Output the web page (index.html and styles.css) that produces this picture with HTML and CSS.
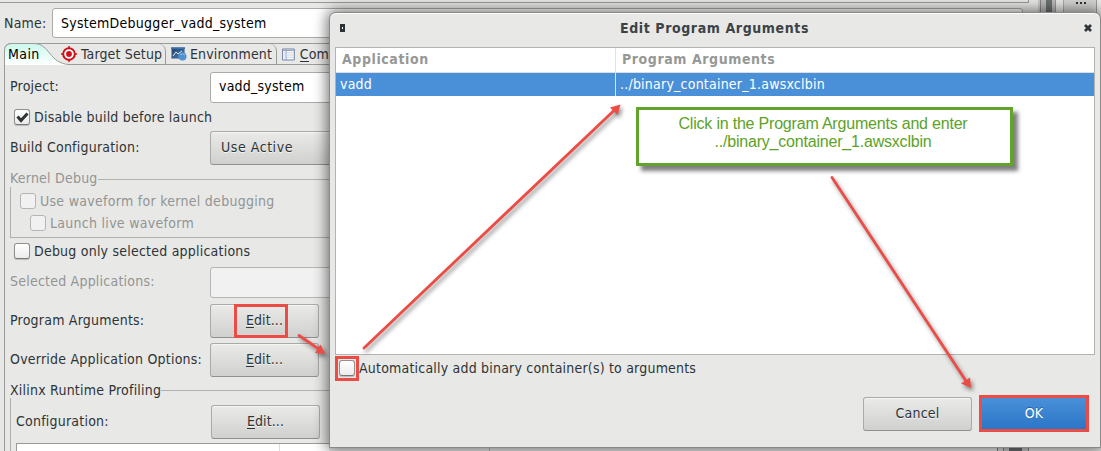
FILE: index.html
```html
<!DOCTYPE html>
<html lang="en">
<head>
<meta charset="utf-8">
<title>Edit Program Arguments</title>
<link rel="stylesheet" href="styles.css">
</head>
<body>
<main class="screen">
  <div class="frame-top"></div>
  <section class="config">
    <div class="name-row"><label>Name:</label><div class="field name-field"><span class="t-name">SystemDebugger_vadd_system</span></div></div>
    <nav class="tabs">
      <div class="tab tab-main">
        <svg class="tab-shape" width="68" height="22" viewBox="0 0 68 22"><defs><linearGradient id="mint" x2="0" y2="1"><stop stop-color="#c9f8ea"/><stop offset="1" stop-color="#fff"/></linearGradient></defs><path d="M.5 22V7Q1 .5 8 .5H30C46 .5 45 20.500 65 21.500V22" fill="url(#mint)" stroke="#9a9c99"/></svg>
        <span class="tab-label">Main</span>
      </div>
      <div class="tab tab-target">
        <svg width="16" height="16" viewBox="0 0 16 16"><circle cx="8" cy="8" r="5.800" fill="#fff" stroke="#cf1019" stroke-width="2"/><circle cx="8" cy="8" r="2.900" fill="#cf1019"/><path d="M8 0V3M8 13V16M0 8H3M13 8H16" stroke="#cf1019" stroke-width="1.500"/></svg>
        <span>Target Setup</span>
      </div>
      <div class="tab tab-env">
        <svg width="16" height="14" viewBox="0 0 16 14"><defs><linearGradient id="scr" x2="1" y2="1"><stop stop-color="#243c66"/><stop offset="1" stop-color="#4b83bd"/></linearGradient></defs><path d="M.5.500H13.500V11.500H.500Z" fill="url(#scr)" stroke="#8c9bac"/><path d="M0 .5H14V2H0Z" fill="#386fae"/><path d="M2 9L5 5L7 7L11 4" fill="none" stroke="#dce8f2"/><circle cx="11.500" cy="9.500" r="4" fill="#4e92d2"/><path d="M9 8Q11 5.500 14 8" stroke="#8fbbe2" fill="none"/></svg>
        <span>Environment</span>
      </div>
      <div class="tab tab-common">
        <svg width="14" height="13" viewBox="0 0 14 13"><path d="M.5.500H13.500V12.500H.500Z" fill="#f9fbff" stroke="#65799f"/><path d="M1 2H13M4.500 1V12" stroke="#8595b5"/><path d="M1 4.500H13M1 7H13M1 9.500H13" stroke="#cbd2df"/></svg>
        <span><u>C</u>om</span>
      </div>
    </nav>
    <div class="panel">
      <div class="row r-project"><label>Project:</label><div class="field">vadd_system</div></div>
      <div class="check-row r-disable"><i class="check"><svg width="14" height="14" viewBox="0 0 14 14"><path d="M2.500 6.500L6 10.500L12.500 3.500" fill="none" stroke="#2e3436" stroke-width="3"/></svg></i><span>Disable build before launch</span></div>
      <div class="row r-build"><label>Build Configuration:</label><div class="button combo">Use Active</div></div>
      <div class="group kernel">
        <div class="legend"><span>Kernel Debug</span></div>
        <div class="group-body">
          <div class="check-row"><i class="check"></i><span>Use waveform for kernel debugging</span></div>
          <div class="check-row nested"><i class="check"></i><span>Launch live waveform</span></div>
        </div>
      </div>
      <div class="check-row r-debug"><i class="check"></i><span>Debug only selected applications</span></div>
      <div class="row r-selected"><label>Selected Applications:</label><div class="field off"></div></div>
      <div class="row r-edit"><label>Program Arguments:</label><div class="button edit"><span><u>E</u>dit...</span></div></div>
      <div class="row r-edit"><label>Override Application Options:</label><div class="button edit"><span><u>E</u>dit...</span></div></div>
      <div class="group profiling">
        <div class="legend"><span>Xilinx Runtime Profiling</span></div>
        <div class="group-body">
          <div class="row r-config"><label>Configuration:</label><div class="button edit"><span><u>E</u>dit...</span></div></div>
          <div class="table-top"><i></i></div>
        </div>
      </div>
    </div>
  </section>
  <div class="right-strip"><div class="scroller"></div><div class="more"><i></i><i></i><i></i></div></div>
  <div class="bottom-strip"></div>

  <section class="dialog">
    <header class="titlebar">
      <svg class="menu" width="5" height="8" viewBox="0 0 5 8"><path d="M0 0H5V8H0Z" fill="#2e3436"/><path d="M2 3H3V5H2Z" fill="#fff"/></svg>
      <h1>Edit Program Arguments</h1>
      <svg class="close" width="8" height="8" viewBox="0 0 8 8"><path d="M1 1L7 7M7 1L1 7" stroke="#2e3436" stroke-width="2.700"/></svg>
    </header>
    <div class="table">
      <div class="thead"><span>Application</span><span>Program Arguments</span></div>
      <div class="trow"><span>vadd</span><span>../binary_container_1.awsxclbin</span></div>
    </div>
    <div class="auto"><div class="auto-mark"><i class="check"></i></div><span>Automatically add binary container(s) to arguments</span></div>
    <footer class="actions"><div class="button cancel">Cancel</div><div class="button ok">OK</div></footer>
  </section>

  <div class="callout">Click in the Program Arguments and enter<br>../binary_container_1.awsxclbin</div>
  <div class="mark-edit"></div>
  <svg class="arrows" width="1101" height="451" viewBox="0 0 1101 451">
    <g stroke="#ec4c46" stroke-width="2.800" fill="#ec4c46" stroke-linecap="round">
      <path d="M299 335.500L318 348.500"/><path d="M325.500 354L315 353L320.500 344.500Z" stroke="none"/>
      <path d="M364 348L614 110.500"/><path d="M620.500 104.500L617.500 115L610 107.500Z" stroke="none"/>
      <path d="M832 177.500L966 381"/><path d="M971 388L961 383.500L970 377.500Z" stroke="none"/>
    </g>
  </svg>
</main>
</body>
</html>
```
FILE: styles.css
```css
* { box-sizing: border-box; }
body { margin: 0; overflow: hidden; background: #e8e8e7; }
.screen { position: relative; width: 1101px; height: 451px; overflow: hidden; background: #e8e8e7; color: #2e3436; font: 14px/18px "DejaVu Sans Condensed", "DejaVu Sans", sans-serif; font-stretch: condensed; letter-spacing: .22px; }
.frame-top { height: 3px; width: 1029px; border-bottom: 1px solid #999b98; border-right: 1px solid #999b98; }
.config { width: 1023px; }
.name-row { display: flex; align-items: center; height: 40px; padding-left: 4px; gap: 5px; }
.name-row label { width: 43px; padding-bottom: 1px; }
.t-name { letter-spacing: .27px; }
.field { height: 31px; background: #fff; border: 1px solid #a9aba7; border-radius: 3px; color: #000; padding: 5px 8px; flex: 1; }
.field.off { background: #f1f1f1; border-color: #b5b6b4; }
.name-field { height: 30px; }
.tabs { display: flex; height: 22px; margin-left: 4px; border-top: 1px solid #9a9c99; border-bottom: 1px solid #9a9c99; border-radius: 7px 0 0; letter-spacing: .15px; }
.tab { display: flex; align-items: center; height: 20px; white-space: nowrap; }
.tab-main { width: 57px; position: relative; color: #000; padding-left: 4px; }
.tab-shape { position: absolute; left: 0; top: -1px; }
.tab-label { position: relative; letter-spacing: .4px; }
.tab-target { width: 105px; gap: 4px; border-right: 1px solid #9a9c99; border-top-right-radius: 7px; }
.tab-env { width: 111px; padding-left: 5px; gap: 3px; border-right: 1px solid #9a9c99; border-top-right-radius: 7px; }
.tab-common { width: 52px; overflow: hidden; padding-left: 5px; gap: 5px; }
.panel { margin-left: 4px; height: 386px; border-left: 1px solid #9a9c99; padding-top: 1px; }
.row { display: flex; align-items: center; padding-left: 5px; }
.row label { width: 200px; flex: none; padding-bottom: 2px; white-space: nowrap; }
.r-project { height: 42px; }
.r-project .field { padding-top: 4px; }
.r-build { height: 44px; }
.check-row { display: flex; align-items: center; gap: 4px; }
.check { width: 16px; height: 16px; flex: none; border: 1px solid #8f918d; border-bottom-color: #777975; border-radius: 3px; background: linear-gradient(#fff, #ececec); box-shadow: 0 1px 1px #bbb; }
.check svg { display: block; }
.r-disable, .r-debug { padding-left: 9px; }
.r-disable { height: 18px; }
.r-debug { height: 23px; padding-bottom: 1px; }
.button { display: flex; align-items: center; height: 34px; border: 1px solid #a9aba7; border-bottom-color: #8f918d; border-radius: 3px; background: linear-gradient(#eaeae9, #d0d0ce); text-shadow: 0 1px #f4f4f4; box-shadow: inset 0 1px #f5f5f5; padding-bottom: 2px; }
.combo { flex: 1; padding-left: 10px; letter-spacing: .55px; }
.edit { width: 109px; justify-content: center; letter-spacing: .1px; }
u { text-decoration: none; box-shadow: inset 0 -1px #2e3436; display: inline-block; height: 17px; }
.group { margin-left: 5px; }
.legend { display: flex; height: 17px; align-items: center; white-space: nowrap; }
.legend::after { content: ""; flex: 1; height: 1px; background: #b0b1af; margin: 2px 0 0 0; }
.group-body { border-left: 1px solid #b0b1af; }
.kernel { height: 70px; color: #929593; }
.kernel .legend span { padding-bottom: 2px; }
.kernel .group-body { height: 51px; border-bottom: 1px solid #b0b1af; padding: 3px 0 0 9px; }
.kernel .check-row { height: 22px; letter-spacing: .28px; }
.kernel .check { background: #f1f1f1; border-color: #b5b6b4; box-shadow: none; }
.kernel .nested { padding-left: 10px; }
.r-selected { height: 38px; }
.r-selected label { color: #929593; }
.r-edit { height: 39px; }
.profiling { padding-top: 2px; }
.r-config { height: 45px; padding-top: 2px; }
.r-config label { width: 195px; padding-bottom: 2px; }
.table-top { height: 8px; margin-left: 5px; border: 1px solid #999b98; border-bottom: 0; background: #fff; }
.table-top i { display: block; height: 7px; width: 263px; border-right: 1px solid #ddd; }
.right-strip { position: absolute; right: 0; top: 0; width: 63px; height: 13px; display: flex; background: #e8e8e7; }
.scroller { width: 18px; background: linear-gradient(90deg, #ccc 0 2px, #888 2px 3px, #bbb 3px 8px, #6d7172 8px 14px, #bbb 14px 17px, #999 17px); margin-right: 7px; }
.more { width: 34px; height: 13px; background: #d3d3d2; border-left: 1px solid #aaa; border-right: 1px solid #999; display: flex; gap: 2px; padding: 2px 0 0 12px; }
.more i { width: 2px; height: 2px; background: #333; }
.bottom-strip { position: absolute; left: 329px; right: 0; bottom: 0; height: 4px; background: linear-gradient(90deg, #eee 0 160px, #bbb 160px 161px, #eee 161px 668px, #888 668px 669px, #ddd 669px 674px, #888 674px 675px, #ccc 675px 680px, #6d7172 680px 693px, #ccc 693px 699px, #888 699px 700px, #e8e8e7 700px); }
.dialog { position: absolute; left: 329px; top: 12px; width: 772px; height: 436px; border: 1px solid #888a87; border-radius: 7px 7px 0 0; background: #e8e8e7; box-shadow: 0 0 14px 2px rgba(0,0,0,.55), inset 0 1px #fff; padding: 0 5px; }
.titlebar { display: flex; align-items: center; justify-content: space-between; height: 34px; padding: 0 3px 4px 5px; }
.titlebar h1 { margin: 0; font-size: 14px; line-height: 18px; letter-spacing: .6px; color: #3c4346; }
.table { height: 308px; border: 1px solid #b3b4b0; background: #fff; }
.thead, .trow { display: grid; grid-template-columns: 280px 1fr; }
.thead { height: 25px; border-bottom: 1px solid #dedede; color: #969896; font-weight: bold; letter-spacing: .58px; }
.thead span { padding: 2px 6px; border-right: 1px solid #e2e2e2; height: 24px; }
.trow { height: 23px; color: #fff; background: #4a90d9; }
.trow span { padding: 2px 4px; border-right: 1px solid #d5e4f5; }
.thead span:last-child, .trow span:last-child { border-right: 0; }
.auto { display: flex; align-items: center; height: 26px; letter-spacing: .2px; }
.auto-mark { width: 24px; height: 25px; border: 3px solid #ec4c46; display: grid; place-items: center; }
.actions { display: flex; justify-content: flex-end; align-items: center; gap: 7px; height: 39px; margin-top: 13px; padding-right: 6px; }
.actions .button { justify-content: center; }
.cancel { width: 109px; }
.actions .ok { width: 110px; height: 37px; border: 3px solid #ec4c46; border-radius: 0; background: linear-gradient(#4a90d9, #2a76c6); color: #fff; text-shadow: 0 -1px #245d99; box-shadow: none; }
.callout { position: absolute; left: 636px; top: 107px; width: 377px; height: 59px; border: 3px solid #62a42b; background: #fff; box-shadow: 5px 5px 4px rgba(0,0,0,.5); color: #5ca226; font: 16px/18px "Liberation Sans", Arial, sans-serif; letter-spacing: -.2px; text-align: center; padding: 5px 3px 0 0; }
.mark-edit { position: absolute; left: 234px; top: 304px; width: 54px; height: 34px; border: 3px solid #ec4c46; }
.arrows { position: absolute; inset: 0; filter: drop-shadow(2px 3px 2px rgba(0,0,0,.45)); }
```
